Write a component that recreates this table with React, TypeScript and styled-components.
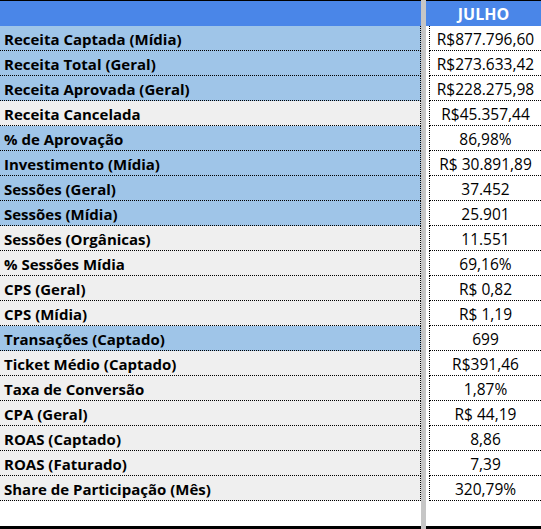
import React from 'react';
import styled, { createGlobalStyle } from 'styled-components';

const GlobalStyle = createGlobalStyle`
  html, body {
    margin: 0;
    padding: 0;
    background: #fff;
  }
  body {
    font-family: 'Open Sans', 'Liberation Sans', sans-serif;
    color: #000;
  }
`;

const Sheet = styled.div`
  display: flex;
  width: 541px;
  height: 529px;
  overflow: hidden;
  background: #fff;
`;

const Column = styled.div<{ $width?: number }>`
  display: flex;
  flex-direction: column;
  width: ${p => (p.$width ? `${p.$width}px` : 'auto')};
  flex: ${p => (p.$width ? 'none' : '1')};
`;

const Divider = styled.div`
  width: 5px;
  flex: none;
  background: #c6c6c6;
`;

const TopRule = styled.div`
  height: 1px;
  background: #000;
`;

const BottomRule = styled.div`
  height: 3px;
  background: #000;
`;

const Filler = styled.div`
  flex: 1;
  background: #fff;
`;

const HeaderCell = styled.div`
  height: 25px;
  background: #4a86e8;
  color: #fff;
  font-weight: 700;
  font-size: 16px;
  display: flex;
  align-items: center;
  justify-content: center;
`;

const LabelCell = styled.div<{ $tone: 'blue' | 'grey' }>`
  box-sizing: content-box;
  height: 23px;
  padding: 0 0 1px 4px;
  border-bottom: 1px dotted #000;
  border-right: 1px dotted #000;
  background: ${p => (p.$tone === 'blue' ? '#9fc5e8' : '#efefef')};
  font-weight: 700;
  font-size: 15px;
  line-height: 20px;
  white-space: nowrap;
  display: flex;
  align-items: flex-end;
`;

const ValueCell = styled.div`
  margin-left: 3px;
  border-left: 1px dotted #000;
  border-bottom: 1px dotted #000;
  height: 23px;
  padding-bottom: 1px;
  font-size: 15.5px;
  line-height: 20px;
  white-space: nowrap;
  display: flex;
  align-items: flex-end;
  justify-content: center;
`;

type Row = { label: string; value: string; tone: 'blue' | 'grey' };

const rows: Row[] = [
  { label: 'Receita Captada (Mídia)', value: 'R$877.796,60', tone: 'blue' },
  { label: 'Receita Total (Geral)', value: 'R$273.633,42', tone: 'blue' },
  { label: 'Receita Aprovada (Geral)', value: 'R$228.275,98', tone: 'blue' },
  { label: 'Receita Cancelada', value: 'R$45.357,44', tone: 'grey' },
  { label: '% de Aprovação', value: '86,98%', tone: 'blue' },
  { label: 'Investimento (Mídia)', value: 'R$ 30.891,89', tone: 'blue' },
  { label: 'Sessões (Geral)', value: '37.452', tone: 'blue' },
  { label: 'Sessões (Mídia)', value: '25.901', tone: 'blue' },
  { label: 'Sessões (Orgânicas)', value: '11.551', tone: 'grey' },
  { label: '% Sessões Mídia', value: '69,16%', tone: 'grey' },
  { label: 'CPS (Geral)', value: 'R$ 0,82', tone: 'grey' },
  { label: 'CPS (Mídia)', value: 'R$ 1,19', tone: 'grey' },
  { label: 'Transações (Captado)', value: '699', tone: 'blue' },
  { label: 'Ticket Médio (Captado)', value: 'R$391,46', tone: 'grey' },
  { label: 'Taxa de Conversão', value: '1,87%', tone: 'grey' },
  { label: 'CPA (Geral)', value: 'R$ 44,19', tone: 'grey' },
  { label: 'ROAS (Captado)', value: '8,86', tone: 'grey' },
  { label: 'ROAS (Faturado)', value: '7,39', tone: 'grey' },
  { label: 'Share de Participação (Mês)', value: '320,79%', tone: 'grey' },
];

export default function App() {
  return (
    <>
      <GlobalStyle />
      <Sheet>
        <Column $width={421}>
          <TopRule />
          <HeaderCell />
          {rows.map(r => (
            <LabelCell key={r.label} $tone={r.tone}>{r.label}</LabelCell>
          ))}
          <Filler />
          <BottomRule />
        </Column>
        <Divider />
        <Column>
          <TopRule />
          <HeaderCell>JULHO</HeaderCell>
          {rows.map(r => (
            <ValueCell key={r.label}>{r.value}</ValueCell>
          ))}
          <Filler />
          <BottomRule />
        </Column>
      </Sheet>
    </>
  );
}
